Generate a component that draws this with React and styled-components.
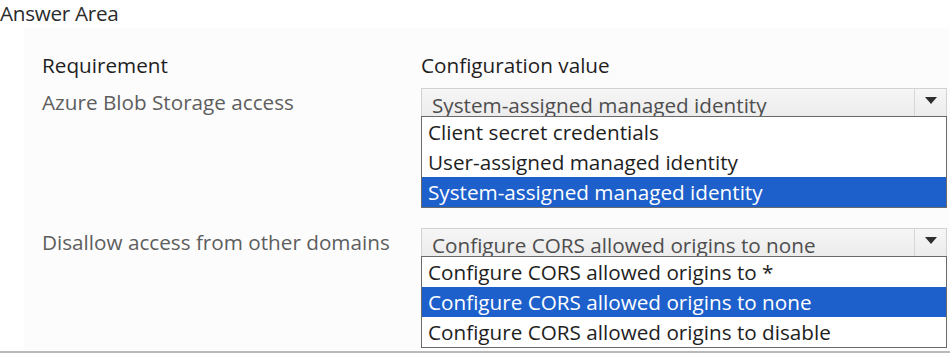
import React from "react";
import styled, { createGlobalStyle } from "styled-components";

const GlobalStyle = createGlobalStyle`
  html, body {
    margin: 0;
    padding: 0;
    background: #ffffff;
  }
  body {
    font-family: "Open Sans", "Noto Sans", "Liberation Sans", sans-serif;
  }
`;

const Page = styled.div`
  width: 950px;
  height: 353px;
  box-sizing: border-box;
  border-bottom: 2px solid #b9b9b9;
  overflow: hidden;
  display: flex;
  flex-direction: column;
`;

const Title = styled.div`
  font-size: 20.7px;
  line-height: 26px;
  height: 28px;
  color: #2b2b2b;
  letter-spacing: -0.3px;
`;

const Panel = styled.div`
  flex: 1;
  margin-left: 24px;
  background: #fcfcfc;
  padding: 24px 3px 0 18px;
  display: grid;
  grid-template-columns: 379px 526px;
  grid-auto-rows: min-content;
`;

const HeadCell = styled.div`
  font-size: 20.7px;
  line-height: 26px;
  color: #1f1f1f;
  font-weight: 500;
  margin-bottom: 10px;
`;

const Label = styled.div`
  font-size: 20.7px;
  line-height: 28px;
  color: #5e5e5e;
`;

const Dropdown = styled.div`
  display: flex;
  flex-direction: column;
  margin-bottom: ${(p) => p.$gap || 0}px;
`;

const Select = styled.div`
  height: 29px;
  box-sizing: border-box;
  border: 1px solid #d2d2d2;
  background: linear-gradient(#f6f6f6, #ececec);
  display: flex;
  align-items: stretch;
  overflow: hidden;
`;

const SelectText = styled.div`
  flex: 1;
  font-size: 20.7px;
  line-height: 28px;
  padding: 2px 0 0 10px;
  color: #4e4e4e;
  white-space: nowrap;
  overflow: hidden;
`;

const ArrowBox = styled.div`
  width: 31px;
  border-left: 1px solid #d6d6d6;
  display: flex;
  align-items: center;
  justify-content: center;
  padding-bottom: 4px;
`;

const List = styled.div`
  margin-top: -1px;
  border: 1px solid #6a6a6a;
  background: #ffffff;
  display: flex;
  flex-direction: column;
`;

const Item = styled.div`
  height: 30px;
  box-sizing: border-box;
  padding: 1px 0 0 6px;
  font-size: 20.7px;
  line-height: 28px;
  white-space: nowrap;
  color: ${(p) => (p.$active ? "#ffffff" : "#1e1e1e")};
  background: ${(p) => (p.$active ? "#1d60cc" : "transparent")};
`;

const Arrow = () => (
  <svg width="12" height="7" viewBox="0 0 12 7">
    <path d="M0 0 L12 0 L6 7 Z" fill="#2e2e2e" />
  </svg>
);

const rows = [
  {
    label: "Azure Blob Storage access",
    value: "System-assigned managed identity",
    options: [
      "Client secret credentials",
      "User-assigned managed identity",
      "System-assigned managed identity",
    ],
    active: 2,
    gap: 20,
  },
  {
    label: "Disallow access from other domains",
    value: "Configure CORS allowed origins to none",
    options: [
      "Configure CORS allowed origins to *",
      "Configure CORS allowed origins to none",
      "Configure CORS allowed origins to disable",
    ],
    active: 1,
    gap: 0,
  },
];

const App = () => {
  return (
    <>
      <GlobalStyle />
      <Page>
        <Title>Answer Area</Title>
        <Panel>
          <HeadCell>Requirement</HeadCell>
          <HeadCell>Configuration value</HeadCell>
          {rows.map((r) => (
            <React.Fragment key={r.label}>
              <Label>{r.label}</Label>
              <Dropdown $gap={r.gap}>
                <Select>
                  <SelectText>{r.value}</SelectText>
                  <ArrowBox>
                    <Arrow />
                  </ArrowBox>
                </Select>
                <List>
                  {r.options.map((o, i) => (
                    <Item key={o} $active={i === r.active}>
                      {o}
                    </Item>
                  ))}
                </List>
              </Dropdown>
            </React.Fragment>
          ))}
        </Panel>
      </Page>
    </>
  );
};

export default App;
